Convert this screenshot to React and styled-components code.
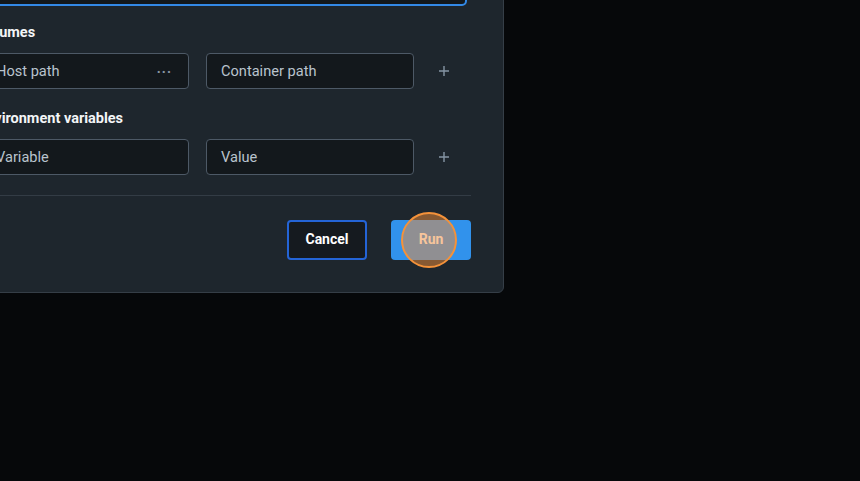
import React from "react";
import styled, { createGlobalStyle } from "styled-components";

const Global = createGlobalStyle`
  html, body { margin: 0; padding: 0; background: #06080a; overflow: hidden; }
  body { font-family: Roboto, "Liberation Sans", sans-serif; width: 860px; height: 481px; }
`;

const Backdrop = styled.div`
  width: 860px;
  height: 481px;
  background: #06080a;
  overflow: hidden;
`;

const Dialog = styled.div`
  box-sizing: border-box;
  width: 556px;
  margin-left: -52px;
  margin-top: -61px;
  padding: 24px 32px 32px 32px;
  background: #1e262d;
  border: 1px solid #353e47;
  border-radius: 6px;
  display: flex;
  flex-direction: column;
`;

const TopInput = styled.div`
  box-sizing: border-box;
  height: 42px;
  margin-right: 4px;
  background: #13181c;
  border: 2px solid #3389e6;
  border-radius: 5px;
`;

const Label = styled.div`
  color: #f3f5f7;
  font-weight: 700;
  font-size: 14.5px;
  line-height: 20px;
  margin-top: ${(p) => p.$top}px;
  margin-bottom: 10px;
  margin-left: -3px;
`;

const Row = styled.div`
  display: flex;
  align-items: center;
  gap: 17px;
`;

const Field = styled.div`
  box-sizing: border-box;
  width: 208px;
  height: 36px;
  padding: 0 16px 0 14px;
  display: flex;
  align-items: center;
  justify-content: space-between;
  background: #13181c;
  border: 1px solid #4d5966;
  border-radius: 4px;
  color: #b9c3cd;
  font-size: 14.6px;
`;

const Dots = styled.span`
  color: #8a96a3;
  font-size: 14px;
  letter-spacing: 1px;
  font-weight: 700;
  margin-right: 0;
  line-height: 1;
  transform: translateY(-3px);
`;

const AddBtn = styled.div`
  flex: 1;
  display: flex;
  align-items: center;
  justify-content: center;
  height: 36px;
  margin-left: -17px;
  padding-left: 3px;
`;

const Divider = styled.div`
  height: 1px;
  background: #333c45;
  margin-top: 20px;
`;

const Footer = styled.div`
  display: flex;
  justify-content: flex-end;
  gap: 24px;
  margin-top: 24px;
`;

const Button = styled.div`
  position: relative;
  box-sizing: border-box;
  width: 80px;
  height: 40px;
  padding-bottom: 2px;
  display: flex;
  align-items: center;
  justify-content: center;
  border-radius: 4px;
  font-weight: 700;
  font-size: 14px;
  color: #ffffff;
  background: ${(p) => (p.$primary ? "#3192ec" : "#151a1f")};
  border: ${(p) => (p.$primary ? "none" : "2px solid #2464d6")};
`;

const Highlight = styled.div`
  position: absolute;
  left: 50%;
  top: 50%;
  width: 52px;
  height: 52px;
  margin-left: -28px;
  margin-top: -28px;
  border-radius: 50%;
  border: 2px solid #f4923a;
  background: rgba(240, 140, 55, 0.5);
  transform: translateX(-2px);
`;

const Plus = () => (
  <svg width="12" height="12" viewBox="0 0 12 12">
    <path d="M6 1v10M1 6h10" stroke="#8595a4" strokeWidth="1.4" fill="none" />
  </svg>
);

export default function App() {
  return (
    <>
      <Global />
      <Backdrop>
        <Dialog>
          <TopInput />
          <Label $top={17}>Volumes</Label>
          <Row>
            <Field>
              Host path<Dots>...</Dots>
            </Field>
            <Field>Container path</Field>
            <AddBtn>
              <Plus />
            </AddBtn>
          </Row>
          <Label $top={20}>Environment variables</Label>
          <Row>
            <Field>Variable</Field>
            <Field>Value</Field>
            <AddBtn>
              <Plus />
            </AddBtn>
          </Row>
          <Divider />
          <Footer>
            <Button>Cancel</Button>
            <Button $primary>
              Run
              <Highlight />
            </Button>
          </Footer>
        </Dialog>
      </Backdrop>
    </>
  );
}
